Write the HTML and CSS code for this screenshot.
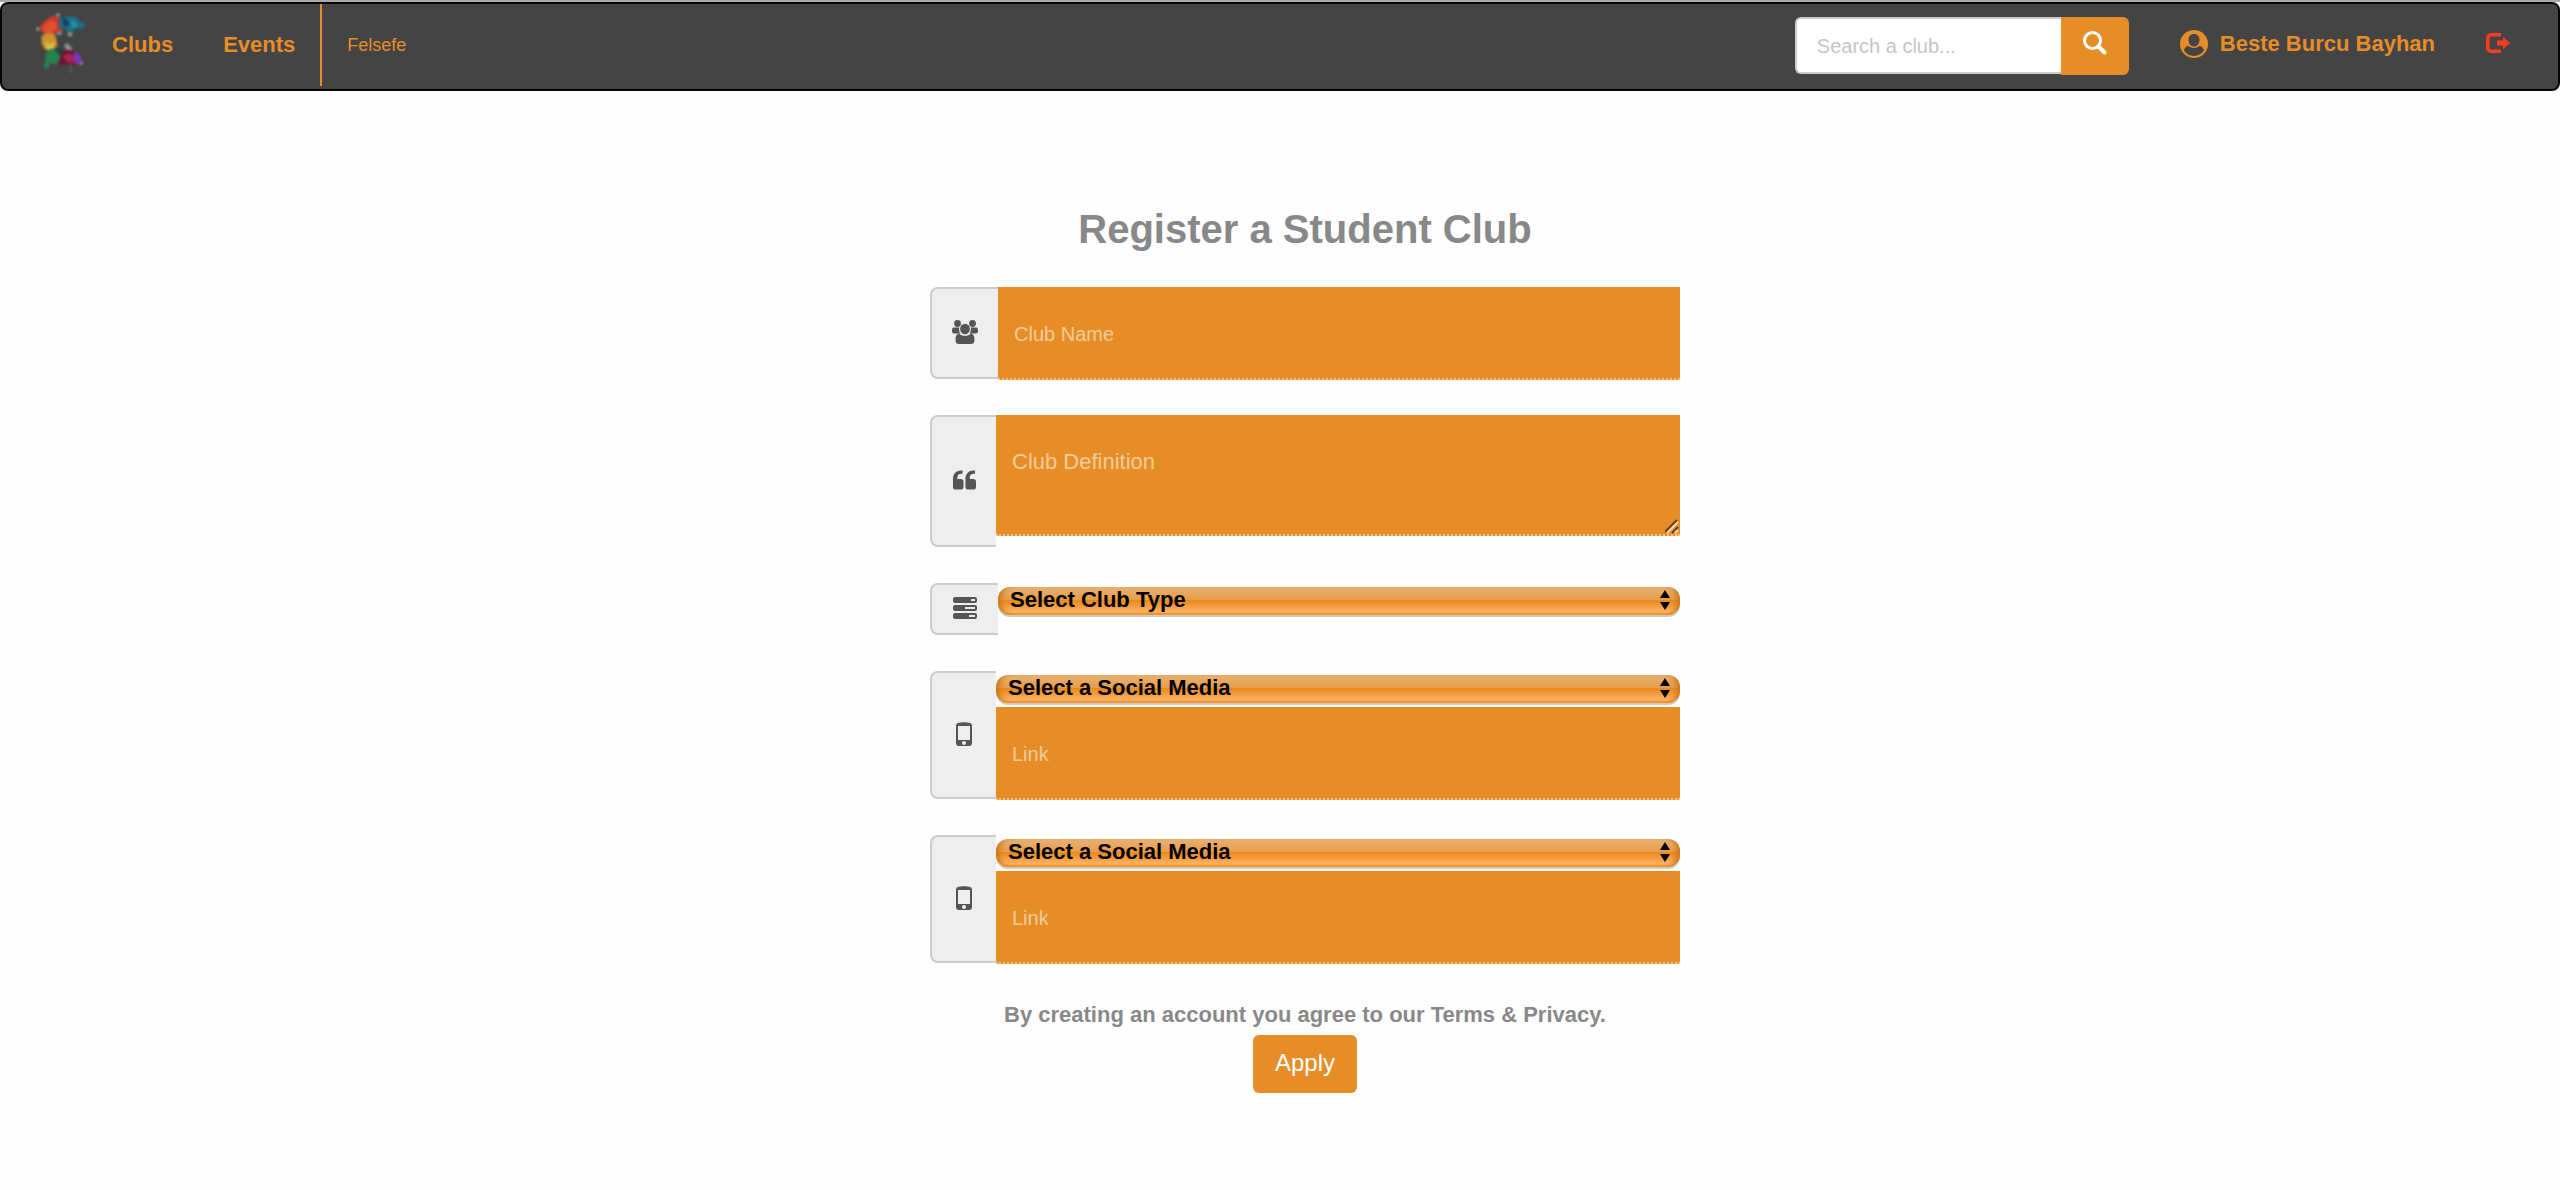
FILE: index.html
```html
<!DOCTYPE html>
<html lang="en">
<head>
<meta charset="utf-8">
<meta name="viewport" content="width=device-width, initial-scale=1">
<title>Register a Student Club</title>
<link rel="stylesheet" href="styles.css">
</head>
<body>
<header class="topbar">
  <nav class="topbar-links" aria-label="Main">
    <a class="logo" href="#" aria-label="Home">
      <svg width="52" height="62" viewBox="0 0 52 62" stroke-linejoin="round" aria-hidden="true">
        <g class="splash">
          <g fill="#b9c9c2" opacity=".6"><circle cx="3" cy="17" r="2"/><circle cx="23" cy="3" r="2"/><circle cx="35" cy="22" r="2.500"/><circle cx="32" cy="34" r="2.500"/><circle cx="34" cy="37" r="3"/><circle cx="48" cy="13" r="2"/><circle cx="24" cy="20" r="3"/><circle cx="46" cy="51" r="2"/><path d="M35 52h1v9h-1z" opacity=".5"/></g>
          <path fill="#c93a2a" stroke="#b5402f" d="M4 17l5-7 6-5 7-1 3 3 3 6-1 6-5 1-5 3-8-1-2-3z"/>
          <path fill="#e0502f" d="M8 14l8-6 5 2 1 6-6 5-7-1z"/>
          <path fill="#1f7089" stroke="#1f6072" d="M24 5l6 1 4-2 7 1 4 5 5 2-3 5-6-1-3 4-6-1-3-3-4 1z"/>
          <path fill="#173f59" d="M27 6l6 2 1 5-5 2z"/>
          <path fill="#2f8f9d" d="M36 9l5 1 2 4-6 2z"/>
          <path fill="#cf9030" stroke="#c2823a" d="M7 24l6-3 6 1 2 5 1 7-5 4-7-1-3-5z"/>
          <path fill="#d3c33f" d="M10 29l5 3 5-2-2 7-6 1z"/>
          <path fill="#25834f" stroke="#2a7d4e" d="M11 42l5-5 5 2 5-1-1 9-2 5-6-1-4 1 1 3-3 2-2-4 2-3z"/>
          <path fill="#154a43" d="M20 38l5-2 4 3-4 5z"/>
          <path fill="#6b1633" stroke="#6b1f38" d="M25 43l5-5 8 1 5 3 1 8-6 3-7-1-7 1-1-3 3-4z"/>
          <path fill="#a82350" d="M28 44l6-3 6 4-2 7-6-2z"/>
          <path fill="#7c37b5" d="M38 42l4-2 4 5 1 4-3 4-5-3z"/>
        </g>
      </svg>
    </a>
    <a class="nav-link" href="#">Clubs</a>
    <a class="nav-link" href="#">Events</a>
    <a class="nav-club" href="#">Felsefe</a>
  </nav>
  <div class="topbar-tools">
    <form class="search" role="search">
      <input class="search-input" type="text" placeholder="Search a club..." aria-label="Search a club">
      <button class="search-button" type="button" aria-label="Search">
        <svg width="24" height="24" viewBox="0 0 24 24" fill="none" stroke="#fff" aria-hidden="true"><circle cx="9.500" cy="9.500" r="8" stroke-width="3"/><path d="M15.500 15.500l6 6" stroke-width="4" stroke-linecap="round"/></svg>
      </button>
    </form>
    <a class="user" href="#">
      <svg width="28" height="28" viewBox="0 0 28 28" aria-hidden="true"><circle cx="14" cy="14" r="14" fill="#e68d28"/><path fill="#444" d="M14 4c3.600 0 5.500 2.600 5.500 6 0 3.800-2.500 6.500-5.500 6.500S8.500 13.800 8.500 10c0-3.400 1.900-6 5.500-6zM4 20.500c.6-2.700 2-4.400 4.500-4.500 1.500 1.200 3.400 2 5.500 2s4-.8 5.500-2c2.500.1 3.900 1.800 4.500 4.500-2.300 3.400-5.800 5.500-10 5.500S6.300 23.900 4 20.500z"/></svg>
      <span>Beste Burcu Bayhan</span>
    </a>
    <a class="logout" href="#" aria-label="Log out">
      <svg width="24" height="20" viewBox="0 0 24 20" aria-hidden="true"><path fill="none" stroke="#ff3b1f" stroke-width="3.500" d="M15 1.750H6C3 1.750 1.750 3 1.750 6v8c0 3 1.250 4.250 4.250 4.250h9"/><path fill="#ff3b1f" d="M11 7.500h6V4l7 6-7 6v-3.500h-6z"/></svg>
    </a>
  </div>
</header>

<main class="page">
  <form class="register">
    <h1 class="title">Register a Student Club</h1>

    <div class="field field-wide">
      <label class="addon" for="club-name" aria-label="Club name">
        <svg width="26" height="24" viewBox="0 0 26 24" fill="#555" aria-hidden="true"><circle cx="5.500" cy="3.500" r="3.400"/><circle cx="20.500" cy="3.500" r="3.400"/><path d="M1.500 7.500h5.800c-.6 2.200-.1 4.300 1.200 6H2C.6 13.500 0 12.500 0 11c0-1.700.4-3.500 1.500-3.500zM24.500 7.500h-5.800c.6 2.200.1 4.300-1.200 6H24c1.400 0 2-1 2-2.500 0-1.700-.4-3.500-1.500-3.500z"/><ellipse cx="13" cy="9" rx="4.900" ry="5.200"/><path d="M7 13.500c1.500 1.500 3.600 2.300 6 2.300s4.500-.8 6-2.300c2.500.3 3.500 3 3.500 6.500 0 2.700-1.300 4-3.500 4H7c-2.200 0-3.500-1.300-3.500-4 0-3.500 1-6.200 3.500-6.500z"/></svg>
      </label>
      <div class="controls"><input class="text" id="club-name" type="text" placeholder="Club Name"></div>
    </div>

    <div class="field">
      <label class="addon" for="club-definition" aria-label="Club definition">
        <svg width="23" height="20" viewBox="0 0 24 20" fill="#555" aria-hidden="true"><path id="quote" d="M10 0v3.500H8.500C6 3.500 4.500 5 4.500 7.500V9H8c2 0 3 1 3 3v5c0 2-1 3-3 3H3c-2 0-3-1-3-3V8.500C0 3.500 3.500 0 8.500 0z"/><use href="#quote" x="13"/></svg>
      </label>
      <div class="controls">
        <div class="area-wrap">
          <textarea class="area" id="club-definition" placeholder="Club Definition"></textarea>
          <svg class="grip" width="14" height="15" viewBox="0 0 14 15" fill="none" stroke-width="2" aria-hidden="true"><path stroke="#664019" d="M0 13L12 1M7 14l6-6"/><path stroke="#f5d9b6" d="M2 14L13 3M10 14l3-3"/></svg>
        </div>
      </div>
    </div>

    <div class="field field-wide">
      <label class="addon addon-short" for="club-type" aria-label="Club type">
        <svg width="24" height="22" viewBox="0 0 24 22" aria-hidden="true"><g fill="#555"><rect width="24" height="6" rx="2"/><rect y="8" width="24" height="6" rx="2"/><rect y="16" width="24" height="6" rx="2"/></g><g fill="#eee"><rect x="18" y="2" width="4" height="2"/><rect x="12" y="10" width="10" height="2"/><rect x="16" y="18" width="6" height="2"/></g></svg>
      </label>
      <div class="controls">
        <div class="select-wrap">
          <select class="select" id="club-type"><option>Select Club Type</option></select>
          <svg class="arrows" width="10" height="20" viewBox="0 0 10 20" aria-hidden="true"><path d="M5 0l5 8H0zM5 20l5-8H0z"/></svg>
        </div>
      </div>
    </div>

    <div class="field">
      <label class="addon" for="link-1" aria-label="First social media link">
        <svg width="16" height="24" viewBox="0 0 16 24" aria-hidden="true"><path fill="#555" fill-rule="evenodd" d="M2 1C5 0 11 0 14 1c1.500.5 2 1.300 2 3v17c0 2-1 3-3 3H3c-2 0-3-1-3-3V4c0-1.700.5-2.500 2-3zM2 4v14h12V4z"/><circle cx="8" cy="21" r="2" fill="#eee"/></svg>
      </label>
      <div class="controls">
        <div class="select-wrap">
          <select class="select" aria-label="First social media"><option>Select a Social Media</option></select>
          <svg class="arrows" width="10" height="20" viewBox="0 0 10 20" aria-hidden="true"><path d="M5 0l5 8H0zM5 20l5-8H0z"/></svg>
        </div>
        <input class="text" id="link-1" type="text" placeholder="Link">
      </div>
    </div>

    <div class="field">
      <label class="addon" for="link-2" aria-label="Second social media link">
        <svg width="16" height="24" viewBox="0 0 16 24" aria-hidden="true"><path fill="#555" fill-rule="evenodd" d="M2 1C5 0 11 0 14 1c1.500.5 2 1.300 2 3v17c0 2-1 3-3 3H3c-2 0-3-1-3-3V4c0-1.700.5-2.500 2-3zM2 4v14h12V4z"/><circle cx="8" cy="21" r="2" fill="#eee"/></svg>
      </label>
      <div class="controls">
        <div class="select-wrap">
          <select class="select" aria-label="Second social media"><option>Select a Social Media</option></select>
          <svg class="arrows" width="10" height="20" viewBox="0 0 10 20" aria-hidden="true"><path d="M5 0l5 8H0zM5 20l5-8H0z"/></svg>
        </div>
        <input class="text" id="link-2" type="text" placeholder="Link">
      </div>
    </div>

    <div class="finish">
      <p class="terms">By creating an account you agree to our Terms &amp; Privacy.</p>
      <button class="apply" type="button">Apply</button>
    </div>
  </form>
</main>
</body>
</html>
```

FILE: styles.css
```css
* {
  box-sizing: border-box;
}

body {
  margin: 0;
  background: #fefefe;
  border-top: 2px solid #aaa;
  font-family: "Liberation Sans", Arial, sans-serif;
  font-size: 22px;
}

a {
  color: #e68d28;
  text-decoration: none;
}

svg {
  display: block;
}

input,
textarea,
select,
button {
  margin: 0;
  font-family: inherit;
}

/* Top bar */

.topbar {
  display: flex;
  justify-content: space-between;
  align-items: stretch;
  min-height: 89px;
  padding: 0 48px 3px 33px;
  background: #444;
  border: 2px solid #060606;
  border-radius: 8px;
}

.topbar-links,
.topbar-tools {
  display: flex;
  align-items: center;
}

.logo {
  margin: 0 25px 4px 0;
}

.splash {
  filter: blur(1px);
}

.nav-link {
  margin-right: 50px;
  font-weight: bold;
}

.nav-link + .nav-link {
  margin-right: 25px;
}

.nav-club {
  display: flex;
  align-items: center;
  align-self: stretch;
  padding-left: 25px;
  border-left: 2px solid #e68d28;
  font-size: 18px;
}

.search {
  display: flex;
  align-items: flex-start;
  margin-right: 51px;
  padding-top: 2px;
}

.search-input {
  width: 266px;
  height: 57px;
  padding: 2px 20px 0;
  background: #fff;
  border: 2px solid #ccc;
  border-right: 0;
  border-radius: 6px 0 0 6px;
  font-size: 20px;
}

.search-input::placeholder {
  color: #c6c6c6;
}

.search-button {
  display: flex;
  justify-content: center;
  width: 68px;
  height: 58px;
  padding: 14px 0 0;
  background: #e68d28;
  border: 0;
  border-radius: 0 6px 6px 0;
}

.user {
  display: flex;
  align-items: center;
  gap: 12px;
  margin-right: 51px;
  padding-bottom: 2px;
  font-weight: bold;
}

.logout {
  padding-bottom: 4px;
}

/* Registration form */

.page {
  padding: 116px 0 96px 50px;
}

.register {
  display: flex;
  flex-direction: column;
  gap: 36px;
  max-width: 750px;
  margin: 0 auto;
}

.title {
  margin: 0;
  color: #888;
  font-size: 40px;
  line-height: 44px;
  text-align: center;
}

.field {
  display: grid;
  grid-template-columns: 66px 1fr;
}

.field-wide {
  grid-template-columns: 68px 1fr;
}

.addon {
  display: flex;
  justify-content: center;
  align-items: center;
  padding-bottom: 2px;
  background: #eee;
  border: 2px solid #ccc;
  border-right: 0;
  border-radius: 8px 0 0 8px;
}

.addon-short {
  min-height: 52px;
}

.controls {
  display: flex;
  flex-direction: column;
}

.text,
.area {
  display: block;
  width: 100%;
  background: #e68d28;
  border: 0;
  border-bottom: 2px dotted #f3c48a;
  border-radius: 0;
  color: #fff;
}

.text {
  height: 93px;
  margin-bottom: -1px;
  padding: 3px 16px 0;
  font-size: 20px;
}

.text::placeholder,
.area::placeholder {
  color: #f3cb9b;
}

.area-wrap {
  position: relative;
  margin-bottom: 11px;
}

.area {
  height: 121px;
  padding: 32px 16px 0;
  font-size: 22px;
  line-height: 30px;
  resize: none;
}

.grip {
  position: absolute;
  right: 1px;
  bottom: 2px;
  pointer-events: none;
}

.select-wrap {
  position: relative;
  padding: 4px 0;
}

.select {
  display: block;
  width: 100%;
  height: 28px;
  padding: 0 32px 3px 12px;
  appearance: none;
  background: linear-gradient(#e9b274, #e89d49 45%, #ea891c 48%, #ffb366 90%, #fb962b 94%);
  border: 0;
  border-radius: 12px;
  box-shadow: 0 2px 0 #ccc, inset 8px 0 6px -5px #c87418, inset -8px 0 6px -5px #c87418;
  color: #000;
  font-size: 22px;
  font-weight: bold;
  line-height: 25px;
}

.arrows {
  position: absolute;
  top: 7px;
  right: 10px;
  pointer-events: none;
}

.finish {
  display: flex;
  flex-direction: column;
  align-items: center;
  gap: 4px;
}

.terms {
  margin: 0;
  color: #888;
  font-weight: bold;
  line-height: 32px;
}

.apply {
  height: 58px;
  padding: 0 22px 2px;
  background: #e68d28;
  border: 0;
  border-radius: 6px;
  color: #fff;
  font-size: 24px;
}
```
